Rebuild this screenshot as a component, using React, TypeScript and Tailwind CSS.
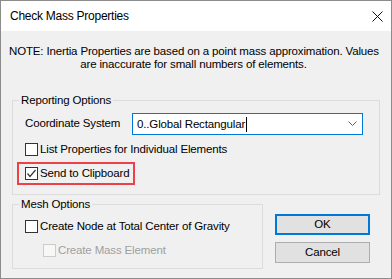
import React from 'react';

const CheckBox: React.FC<{ checked?: boolean; disabled?: boolean }> = ({ checked, disabled }) => (
  <div
    className={
      disabled
        ? 'w-[13px] h-[13px] shrink-0 border border-[#cccccc] bg-[#f7f7f7]'
        : 'w-[13px] h-[13px] shrink-0 border border-[#333333] bg-white flex items-center justify-center'
    }
  >
    {checked && (
      <svg width="11" height="11" viewBox="0 0 11 11">
        <polyline points="1.5,5.5 4,8.5 9.5,2" fill="none" stroke="#333333" strokeWidth="1.2" />
      </svg>
    )}
  </div>
);

const App: React.FC = () => {
  return (
    <div className="w-[392px] h-[279px] border border-[#8c8c8c] bg-[#f0f0f0] flex flex-col font-['Liberation_Sans',sans-serif] text-[11.5px] tracking-[-0.15px] text-black whitespace-nowrap">
      {/* title bar */}
      <div className="h-[30px] shrink-0 bg-white flex items-center justify-between pl-[9px] pr-[8px]">
        <span className="text-[12px] tracking-[-0.25px] leading-[15px]">Check Mass Properties</span>
        <svg width="11" height="11" viewBox="0 0 11 11">
          <path d="M0.5 0.5 L10.5 10.5 M10.5 0.5 L0.5 10.5" stroke="#111111" strokeWidth="1" />
        </svg>
      </div>

      <p className="mt-[14px] pl-[8px] pr-[13px] text-center leading-[13px]">
        NOTE: Inertia Properties are based on a point mass approximation. Values
        <br />
        are inaccurate for small numbers of elements.
      </p>

      <fieldset className="mx-[11px] mt-[22px] border border-[#dcdcdc] p-0">
        <legend className="ml-[6px] px-[2px] leading-[14px]">Reporting Options</legend>
        <div className="pl-[12px] pr-[16px] pb-[9px]">
          <div className="mt-[6px] flex items-center">
            <span className="w-[107px]">Coordinate System</span>
            <div className="w-[231px] h-[22px] border border-[#0078d7] bg-white flex items-center pl-[4px] pr-[5px]">
              <span className="leading-[15px]">0..Global Rectangular</span>
              <span className="w-[1px] h-[15px] bg-black ml-[1px]" />
              <svg className="ml-auto" width="9" height="6" viewBox="0 0 9 6">
                <polyline points="0.5,0.5 4.5,4.5 8.5,0.5" fill="none" stroke="#606060" strokeWidth="1" />
              </svg>
            </div>
          </div>
          <div className="mt-[8px] h-[13px] flex items-center">
            <CheckBox />
            <span className="ml-[2px]">List Properties for Individual Elements</span>
          </div>
          <div className="mt-[6px] ml-[-8px] w-[118px] h-[23px] border-2 border-[#ee4048] pl-[6px] flex items-center">
            <CheckBox checked />
            <span className="ml-[2px]">Send to Clipboard</span>
          </div>
        </div>
      </fieldset>

      <div className="mt-[2px] flex items-start">
        <fieldset className="ml-[11px] w-[251px] border border-[#dcdcdc] p-0">
          <legend className="ml-[6px] px-[2px] leading-[14px]">Mesh Options</legend>
          <div className="pl-[12px] pb-[11px]">
            <div className="mt-[9px] h-[13px] flex items-center">
              <CheckBox />
              <span className="ml-[2px]">Create Node at Total Center of Gravity</span>
            </div>
            <div className="mt-[11px] ml-[18px] h-[13px] flex items-center">
              <CheckBox disabled />
              <span className="ml-[2px] text-[#a0a0a0]">Create Mass Element</span>
            </div>
          </div>
        </fieldset>

        <div className="ml-[12px] mt-[17px] flex flex-col">
          <button className="w-[95px] h-[21px] border-2 border-[#0078d7] bg-[#e1e1e1] flex items-center justify-center leading-[15px]">
            OK
          </button>
          <button className="mt-[7px] w-[95px] h-[21px] border border-[#adadad] bg-[#e1e1e1] flex items-center justify-center leading-[15px]">
            Cancel
          </button>
        </div>
      </div>
    </div>
  );
};

export default App;
